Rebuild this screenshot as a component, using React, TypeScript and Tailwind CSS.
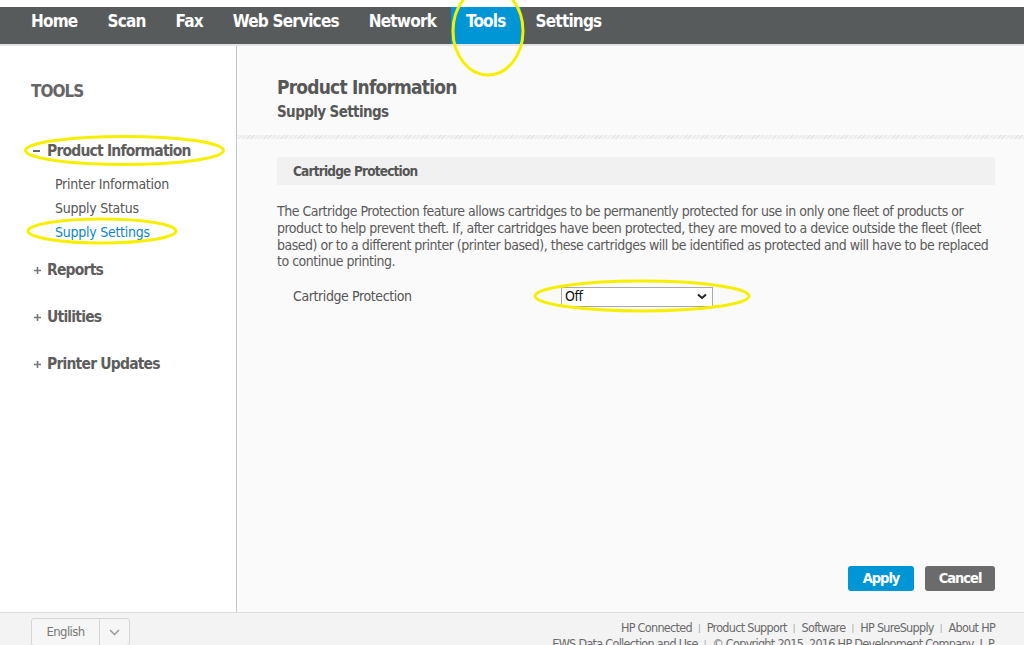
import React from "react";

const FONT = { fontFamily: '"Liberation Sans Narrow", "DejaVu Sans Condensed", "DejaVu Sans", sans-serif' };

function NavItem({ label, active }: { label: string; active?: boolean }) {
  return (
    <div
      className={
        "h-full flex items-center pb-[8px] px-[15px] text-[17px] tracking-[-0.8px] font-bold text-white " +
        (active ? "bg-[#0096d6]" : "")
      }
    >
      {label}
    </div>
  );
}

function SideGroup({ label, open }: { label: string; open?: boolean }) {
  return (
    <div className="flex items-center text-[15.5px] tracking-[-0.8px] font-bold text-[#5d5d5d] leading-[20px]">
      <span className="w-[16px] flex items-center">
        {open ? (
          <span className="block w-[7px] h-[2px] bg-[#666] ml-[2px]" />
        ) : (
          <svg width="9" height="9" viewBox="0 0 9 9" className="ml-[2px]">
            <path d="M4.5 1 V8 M1 4.5 H8" stroke="#777" strokeWidth="1.6" />
          </svg>
        )}
      </span>
      <span>{label}</span>
    </div>
  );
}

function Sep() {
  return <span className="text-[9px] text-[#999] tracking-normal">|</span>;
}

export default function App() {
  return (
    <div className="relative w-[1024px] h-[645px] overflow-hidden bg-white flex flex-col" style={FONT}>
      {/* top strip */}
      <div className="h-[7px] bg-white shrink-0" />
      {/* nav bar */}
      <div className="h-[37px] shrink-0 bg-[#585b5c] flex items-stretch pl-[16px]">
        <NavItem label="Home" />
        <NavItem label="Scan" />
        <NavItem label="Fax" />
        <NavItem label="Web Services" />
        <NavItem label="Network" />
        <NavItem label="Tools" active />
        <NavItem label="Settings" />
      </div>
      <div className="h-[2px] shrink-0 bg-[#e4e4e4]" />

      {/* body */}
      <div className="flex-1 flex min-h-0">
        {/* sidebar */}
        <div className="w-[237px] shrink-0 bg-white border-r border-[#c8c8c8] pl-[31px] pt-[33px]">
          <div className="text-[17px] tracking-[-1px] font-bold text-[#666] leading-[24px]">TOOLS</div>
          <div className="mt-[38px]">
            <SideGroup label="Product Information" open />
          </div>
          <div className="pl-[24px] mt-[13px] flex flex-col gap-[4px] text-[14px] tracking-[-0.25px] text-[#555] leading-[20px]">
            <div>Printer Information</div>
            <div>Supply Status</div>
            <div className="text-[#0a86c9]">Supply Settings</div>
          </div>
          <div className="mt-[18px] flex flex-col gap-[27px]">
            <SideGroup label="Reports" />
            <SideGroup label="Utilities" />
            <SideGroup label="Printer Updates" />
          </div>
        </div>

        {/* main */}
        <div className="flex-1 bg-[#fafafa] flex flex-col">
          <div className="pl-[40px] pt-[28px] h-[89px]">
            <div className="text-[19px] tracking-[-0.8px] font-bold text-[#575757] leading-[26px]">Product Information</div>
            <div className="text-[15px] tracking-[-0.6px] font-bold text-[#575757] leading-[20px] mt-[2px]">Supply Settings</div>
          </div>
          <div className="h-[4px] shrink-0 bg-[repeating-linear-gradient(135deg,#e6e6e6_0px,#e6e6e6_1px,#f4f4f4_1px,#f4f4f4_3px)]" />
          <div className="pl-[40px] pr-[29px] pt-[18px] flex-1 flex flex-col">
            <div className="h-[28px] bg-[#f1f1f1] flex items-center pl-[16px] text-[13.5px] tracking-[-0.8px] font-bold text-[#555]">
              Cartridge Protection
            </div>
            <div className="mt-[18px] text-[14px] tracking-[-0.5px] leading-[16.8px] text-[#5a5a5a] whitespace-nowrap">
              <div>The Cartridge Protection feature allows cartridges to be permanently protected for use in only one fleet of products or</div>
              <div>product to help prevent theft. If, after cartridges have been protected, they are moved to a device outside the fleet (fleet</div>
              <div>based) or to a different printer (printer based), these cartridges will be identified as protected and will have to be replaced</div>
              <div>to continue printing.</div>
            </div>
            <div className="mt-[16px] flex items-center">
              <div className="w-[284px] pl-[16px] text-[14px] tracking-[-0.4px] text-[#555]">Cartridge Protection</div>
              <div className="w-[152px] h-[20px] bg-white border border-[#a9a9a9] flex items-center justify-between pl-[3px] pr-[5px] text-[14px] tracking-[-0.4px] text-[#111]">
                <span>Off</span>
                <svg width="10" height="7" viewBox="0 0 10 7">
                  <path d="M1 1.5 L5 5 L9 1.5" stroke="#222" strokeWidth="2" fill="none" />
                </svg>
              </div>
            </div>
            <div className="flex-1" />
            <div className="flex justify-end gap-[11px] pb-[21px]">
              <div className="w-[66px] h-[25px] rounded-[3px] bg-[#0096d6] text-white font-bold text-[14.5px] tracking-[-1px] flex items-center justify-center">
                Apply
              </div>
              <div className="w-[70px] h-[25px] rounded-[3px] bg-[#6b6b6b] text-white font-bold text-[14.5px] tracking-[-1px] flex items-center justify-center">
                Cancel
              </div>
            </div>
          </div>
        </div>
      </div>

      {/* footer */}
      <div className="h-[33px] shrink-0 bg-[#f3f3f3] border-t border-[#dcdcdc] flex items-start pt-[5px] pl-[31px] pr-[29px]">
        <div className="w-[99px] h-[28px] border border-[#d6d6d6] rounded-[3px] bg-[#f6f6f6] flex text-[13px] tracking-[-0.6px] text-[#777]">
          <div className="flex-1 flex items-center justify-center border-r border-[#d6d6d6]">English</div>
          <div className="w-[29px] flex items-center justify-center">
            <svg width="11" height="7" viewBox="0 0 11 7">
              <path d="M1 1 L5.5 5.5 L10 1" stroke="#999" strokeWidth="1.5" fill="none" />
            </svg>
          </div>
        </div>
        <div className="flex-1 flex flex-col items-end text-[12.5px] tracking-[-0.7px] text-[#6a6a6a] leading-[16px] pt-[2px]">
          <div className="flex items-center gap-[6px]">
            <span>HP Connected</span>
            <Sep />
            <span>Product Support</span>
            <Sep />
            <span>Software</span>
            <Sep />
            <span>HP SureSupply</span>
            <Sep />
            <span>About HP</span>
          </div>
          <div className="flex items-center gap-[6px]">
            <span>EWS Data Collection and Use</span>
            <Sep />
            <span>© Copyright 2015, 2016 HP Development Company, L.P.</span>
          </div>
        </div>
      </div>

      {/* annotation ellipses */}
      <svg className="absolute inset-0 pointer-events-none" width="1024" height="645" viewBox="0 0 1024 645">
        <g fill="none" stroke="#f6f000" strokeWidth="3">
          <ellipse cx="488" cy="31" rx="35" ry="44" />
          <ellipse cx="124.5" cy="150.5" rx="99" ry="14" />
          <ellipse cx="102" cy="231" rx="74" ry="12" />
          <ellipse cx="642" cy="296" rx="107" ry="15" />
        </g>
      </svg>
    </div>
  );
}
